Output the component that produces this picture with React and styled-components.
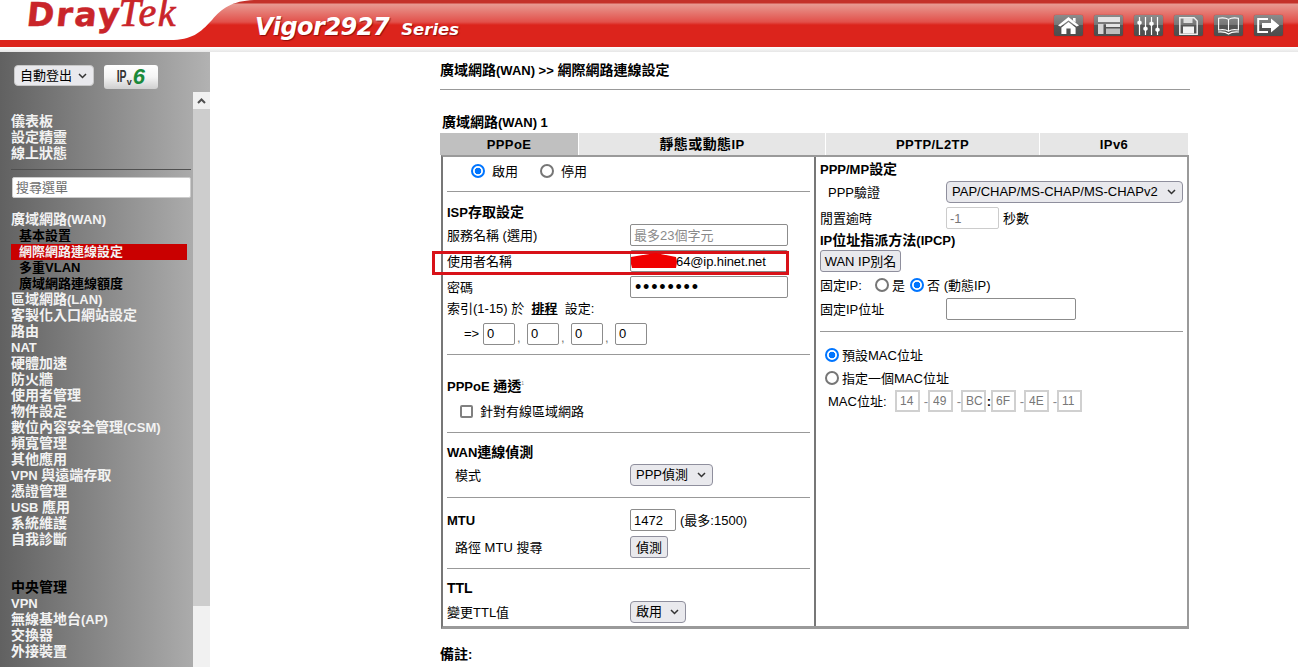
import React from 'react'
import styled, { createGlobalStyle } from 'styled-components'

const FONT = `"Liberation Sans", Arial, "Noto Sans CJK TC", sans-serif`
const CHEVRON = `url("data:image/svg+xml,%3Csvg xmlns='http://www.w3.org/2000/svg' width='9' height='6'%3E%3Cpath d='M1 1l3.5 3.5L8 1' fill='none' stroke='%23333' stroke-width='1.5'/%3E%3C/svg%3E")`

const GlobalStyle = createGlobalStyle`
html, body {
	margin: 0;
	padding: 0;
	height: 100%;
	overflow: hidden;
	background: #fff;
	font-family: ${FONT};
	font-size: 13px;
	color: #000;
}
`

const topMenu = ['儀表板', '設定精靈', '線上狀態']
const mainMenu = [
	{ label: '廣域網路(WAN)' },
	{ label: '基本設置', sub: true },
	{ label: '網際網路連線設定', sub: true, active: true },
	{ label: '多重VLAN', sub: true },
	{ label: '廣域網路連線額度', sub: true },
	{ label: '區域網路(LAN)' },
	{ label: '客製化入口網站設定' },
	{ label: '路由' },
	{ label: 'NAT' },
	{ label: '硬體加速' },
	{ label: '防火牆' },
	{ label: '使用者管理' },
	{ label: '物件設定' },
	{ label: '數位內容安全管理(CSM)' },
	{ label: '頻寬管理' },
	{ label: '其他應用' },
	{ label: 'VPN 與遠端存取' },
	{ label: '憑證管理' },
	{ label: 'USB 應用' },
	{ label: '系統維護' },
	{ label: '自我診斷' },
]
const centralMenu = ['VPN', '無線基地台(AP)', '交換器', '外接裝置']
const tabs = [
	{ label: 'PPPoE', w: 138, active: true },
	{ label: '靜態或動態IP', w: 246 },
	{ label: 'PPTP/L2TP', w: 213 },
	{ label: 'IPv6', w: 148 },
]
const macParts = [
	{ v: '14', sep: '-' },
	{ v: '49', sep: '-' },
	{ v: 'BC', sep: ':' },
	{ v: '6F', sep: '-' },
	{ v: '4E', sep: '-' },
	{ v: '11' },
]

// bold headings use bigger CJK than latin, so the ascii runs get their own span
const Mixed = ({ text }) => text.split(/([\x00-\x7f]+)/).map((s, i) => (i % 2 ? <Ascii key={i}>{s}</Ascii> : s))

const HomeIcon = () => (
	<svg width="21" height="17" viewBox="0 0 21 17">
		<path d="M10.5 0 L21 8.5 L18.6 9.6 L10.5 3.4 L2.4 9.6 L0 8.5 Z" fill="#fff" />
		<path d="M15 1 h2.6 v4.4 L15 3.4 Z" fill="#fff" />
		<path d="M10.5 5 L17.6 10.4 V17 H12.6 V11.6 H8.4 V17 H3.4 V10.4 Z" fill="#fff" />
	</svg>
)

const LayoutIcon = () => (
	<svg width="22" height="17" viewBox="0 0 22 17">
		<rect x="0" y="0" width="22" height="5" fill="#e4e4e4" />
		<rect x="0" y="7" width="5.5" height="10" fill="#d4d4d4" />
		<rect x="8" y="7" width="14" height="3" fill="#e4e4e4" />
		<rect x="8" y="11.5" width="14" height="5.5" fill="#bdbdbd" />
	</svg>
)

const SlidersIcon = () => (
	<svg width="23" height="18" viewBox="0 0 23 18" stroke="#fff" fill="#fff">
		<path d="M2.5 0 V18 M8.5 0 V18 M14.5 0 V18 M20.5 0 V18" strokeWidth="1.2" />
		<rect x="0.5" y="4" width="4" height="3.4" rx="1.4" strokeWidth="0.4" />
		<rect x="6.5" y="10" width="4" height="3.4" rx="1.4" strokeWidth="0.4" />
		<rect x="12.5" y="5" width="4" height="3.4" rx="1.4" strokeWidth="0.4" />
		<rect x="18.5" y="11" width="4" height="3.4" rx="1.4" strokeWidth="0.4" />
	</svg>
)

const SaveIcon = () => (
	<svg width="19" height="18" viewBox="0 0 19 18" fill="none">
		<path d="M0.8 0.8 H15 L18.2 4 V17.2 H0.8 Z" stroke="#eee" strokeWidth="1.5" />
		<rect x="4.5" y="1" width="9" height="5" fill="#ddd" />
		<rect x="4" y="9.5" width="11" height="7" fill="#f2f2f2" />
	</svg>
)

const BookIcon = () => (
	<svg width="23" height="18" viewBox="0 0 23 18" fill="none" stroke="#fff" strokeWidth="1.1">
		<path d="M11.5 2.4 C9 0.8 5 0.6 1.6 1.2 V13 C5 12.4 9 12.6 11.5 14.2 C14 12.6 18 12.4 21.4 13 V1.2 C18 0.6 14 0.8 11.5 2.4 Z" />
		<path d="M11.5 2.4 V14.2" />
		<path d="M1 15 C5 14.6 9 15 11.5 17 C14 15 18 14.6 22 15" />
	</svg>
)

const LogoutIcon = () => (
	<svg width="23" height="15" viewBox="0 0 23 15" fill="none">
		<path d="M11 1 H1.2 V14 H11" stroke="#fff" strokeWidth="2" />
		<path d="M5 5 H14 V0.6 L22.4 7.5 L14 14.4 V10 H5 Z" fill="#fff" />
	</svg>
)

const headerIcons = [HomeIcon, LayoutIcon, SlidersIcon, SaveIcon, BookIcon, LogoutIcon]

export default function App() {
	return (
		<Page>
			<GlobalStyle />
			<Header>
				<Swoosh viewBox="0 0 300 50" preserveAspectRatio="none">
					<path d="M0 0 H254 C232 1 222 8 212 20 C200 33 192 40 170 40 H0 Z" fill="#fff" />
				</Swoosh>
				<Logo>
					<LogoDray>Dray</LogoDray>
					<LogoTek>Tek</LogoTek>
				</Logo>
				<Model>
					Vigor2927<ModelSeries>Series</ModelSeries>
				</Model>
				<HeaderIcons>
					{headerIcons.map((Icon, i) => (
						<IconButton key={i}>
							<Icon />
						</IconButton>
					))}
				</HeaderIcons>
			</Header>
			<Body>
				<Sidebar>
					<SideTop>
						<LogoutSelect defaultValue="a">
							<option value="a">自動登出</option>
						</LogoutSelect>
						<Ipv6Button>
							<span>IP</span>
							<small>v</small>
							<b>6</b>
						</Ipv6Button>
					</SideTop>
					<SideBody>
						<Menu>
							{topMenu.map(m => <MenuItem key={m}>{m}</MenuItem>)}
							<MenuRule />
							<SearchInput placeholder="搜尋選單" />
							<MenuGroup $top={14}>
								{mainMenu.map(m => (
									<MenuItem key={m.label} $sub={m.sub} $active={m.active}>
										<Mixed text={m.label} />
									</MenuItem>
								))}
							</MenuGroup>
							<MenuGroup $top={32}>
								<MenuHead>中央管理</MenuHead>
								{centralMenu.map(m => <MenuItem key={m}><Mixed text={m} /></MenuItem>)}
							</MenuGroup>
						</Menu>
						<Scrollbar>
							<ScrollUp>
								<svg width="9" height="6" viewBox="0 0 9 6" fill="none">
									<path d="M1 5 L4.5 1.5 L8 5" stroke="#505050" strokeWidth="2" />
								</svg>
							</ScrollUp>
							<ScrollThumb />
						</Scrollbar>
					</SideBody>
				</Sidebar>
				<Main>
					<PageTitle><Mixed text="廣域網路(WAN) >> 網際網路連線設定" /></PageTitle>
					<TitleRule />
					<WanTitle><Mixed text="廣域網路(WAN) 1" /></WanTitle>
					<Tabs>
						{tabs.map(t => <Tab key={t.label} $w={t.w} $active={t.active}><Mixed text={t.label} /></Tab>)}
					</Tabs>
					<Panel>
						<LeftCell>
							<Row $h={28} $indent={24}>
								<Radio name="en" defaultChecked />
								<RadioLabel $w={48}>啟用</RadioLabel>
								<Radio name="en" />
								<RadioLabel>停用</RadioLabel>
							</Row>
							<Divider $top={6} />

							<SectionTitle $top={12}><Mixed text="ISP存取設定" /></SectionTitle>
							<Row $h={26} $top={2}>
								<Label>服務名稱 (選用)</Label>
								<TextInput $w={158} placeholder="最多23個字元" />
							</Row>
							<Row $h={26}>
								<Label>使用者名稱</Label>
								<UserInput $w={158} defaultValue="64@ip.hinet.net" />
							</Row>
							<Row $h={26}>
								<Label>密碼</Label>
								<PasswordInput $w={158} type="password" defaultValue="12345678" />
							</Row>
							<Row $h={16}>
								<PlainText>索引(1-15) 於&nbsp;&nbsp;<ScheduleLink>排程</ScheduleLink>&nbsp;&nbsp;設定:</PlainText>
							</Row>
							<Row $h={27} $top={4} $indent={17}>
								<Arrow>=&gt;</Arrow>
								{[0, 1, 2, 3].map(i => (
									<IndexField key={i}>
										<TextInput $w={32} defaultValue="0" />
										{i < 3 && <Comma>,</Comma>}
									</IndexField>
								))}
							</Row>
							<Divider $top={7} />

							<SectionTitle $top={20}><Mixed text="PPPoE 通透" /><Sup>1</Sup></SectionTitle>
							<Row $h={24} $top={8} $indent={12}>
								<Check />
								<RadioLabel>針對有線區域網路</RadioLabel>
							</Row>
							<Divider $top={9} />

							<SectionTitle $top={11}><Mixed text="WAN連線偵測" /></SectionTitle>
							<Row $h={26} $top={2}>
								<Label $indent={8}>模式</Label>
								<Select $w={83}><option>PPP偵測</option></Select>
							</Row>
							<Divider $top={9} />

							<Row $h={26} $top={9}>
								<BoldLabel>MTU</BoldLabel>
								<TextInput $w={46} defaultValue="1472" />
								<Hint>(最多:1500)</Hint>
							</Row>
							<Row $h={26} $top={1}>
								<Label $indent={8}>路徑 MTU 搜尋</Label>
								<PushButton $w={38}>偵測</PushButton>
							</Row>
							<Divider $top={8} />

							<SectionTitle $top={11}>TTL</SectionTitle>
							<Row $h={26} $top={3}>
								<Label>變更TTL值</Label>
								<Select $w={56}><option>啟用</option></Select>
							</Row>
						</LeftCell>
						<RightCell>
							<SectionTitle $top={4}><Mixed text="PPP/MP設定" /></SectionTitle>
							<Row $h={26} $top={2}>
								<Label $w={126} $indent={8}>PPP驗證</Label>
								<Select $w={237}><option>PAP/CHAP/MS-CHAP/MS-CHAPv2</option></Select>
							</Row>
							<Row $h={26}>
								<Label $w={126}>閒置逾時</Label>
								<TextInput $w={53} $disabled disabled defaultValue="-1" />
								<Hint>秒數</Hint>
							</Row>
							<SectionTitle $top={1}><Mixed text="IP位址指派方法(IPCP)" /></SectionTitle>
							<Row $h={22} $top={2}>
								<PushButton $w={81}>WAN IP別名</PushButton>
							</Row>
							<Row $h={26}>
								<StaticLabel>固定IP:</StaticLabel>
								<Radio name="fixed" />
								<InlineText>是</InlineText>
								<Radio name="fixed" defaultChecked />
								<InlineText>否 (動態IP)</InlineText>
							</Row>
							<Row $h={22}>
								<Label $w={126}>固定IP位址</Label>
								<TextInput $w={130} />
							</Row>
							<Divider $top={11} />
							<Row $h={22} $top={12} $indent={5}>
								<Radio name="mac" defaultChecked />
								<InlineText>預設MAC位址</InlineText>
							</Row>
							<Row $h={22} $top={1} $indent={5}>
								<Radio name="mac" />
								<InlineText>指定一個MAC位址</InlineText>
							</Row>
							<Row $h={22} $top={1} $indent={8}>
								<MacLabel>MAC位址:</MacLabel>
								{macParts.map(p => (
									<MacField key={p.v}>
										<MacInput disabled defaultValue={p.v} />
										{p.sep && <MacSep $bold={p.sep === ':'}>{p.sep}</MacSep>}
									</MacField>
								))}
							</Row>
						</RightCell>
						<Highlight />
						<Scribble viewBox="0 0 46 15">
							<path d="M0 4 C8 3 16 1 25 0 C31 1 38 3 45 4 L46 9 L45 15 H1 L0 11 Z" fill="#f00000" />
						</Scribble>
					</Panel>
					<Footnote>備註<Ascii>:</Ascii></Footnote>
				</Main>
			</Body>
		</Page>
	)
}

const Ascii = styled.span`
	font-size: 13px;
`

const Page = styled.div`
	width: 100%;
	height: 100vh;
	display: flex;
	flex-direction: column;
	overflow: hidden;
`

const Header = styled.header`
	position: relative;
	flex: none;
	height: 52px;
	display: flex;
	align-items: flex-start;
	background:
		linear-gradient(#fff, #e6e6e6) 0 47px / 100% 5px no-repeat,
		linear-gradient(#c4312a 0, #c4312a 3px, #e89a92 4px, #e2504a 22px, #dc241c 25px, #dc241c 47px) 0 0 / 100% 47px no-repeat;
`

const Swoosh = styled.svg`
	position: absolute;
	left: 0;
	top: 0;
	width: 300px;
	height: 50px;
`

const Logo = styled.div`
	position: relative;
	margin: -2px 0 0 27px;
	width: 228px;
	flex: none;
	display: flex;
	align-items: baseline;
	color: #c9252a;
	line-height: 30px;
`

const LogoDray = styled.span`
	font: bold 33px "DejaVu Sans", sans-serif;
	line-height: 30px;
	letter-spacing: 2px;
	-webkit-text-stroke: 0.5px #c9252a;
	transform: skewX(-6deg);
`

const LogoTek = styled.span`
	font: italic 40px "Liberation Serif", serif;
	line-height: 30px;
	margin-left: -3px;
	letter-spacing: 1.5px;
	-webkit-text-stroke: 0.7px #c9252a;
`

const Model = styled.div`
	position: relative;
	margin-top: 13px;
	font: italic bold 24px "DejaVu Sans", sans-serif;
	letter-spacing: -0.5px;
	color: #fff;
	line-height: 28px;
	text-shadow: 1px 1px 1px rgba(90, 0, 0, .6);
`

const ModelSeries = styled.span`
	font-size: 16.5px;
	margin-left: 12px;
	letter-spacing: 0;
`

const HeaderIcons = styled.nav`
	position: relative;
	margin: 15px 15px 0 auto;
	display: flex;
	gap: 11px;
`

const IconButton = styled.div`
	width: 29px;
	height: 21px;
	border-radius: 2px;
	display: flex;
	align-items: center;
	justify-content: center;
	background: linear-gradient(#8b8b8b 0, #777 45%, #555 50%, #4d4d4d 100%);
	box-shadow: 0 0 1px rgba(60, 0, 0, .7);
`

const Body = styled.div`
	flex: 1;
	display: flex;
	min-height: 0;
`

const Sidebar = styled.aside`
	flex: none;
	width: 210px;
	display: flex;
	flex-direction: column;
	background: linear-gradient(90deg, #616161, #b2b2b2);
`

const SideTop = styled.div`
	flex: none;
	height: 40px;
	display: flex;
	align-items: flex-start;
	gap: 10px;
	padding: 13px 0 0 14px;
	box-sizing: border-box;
`

const LogoutSelect = styled.select`
	appearance: none;
	width: 80px;
	height: 21px;
	padding: 0 0 1px 5px;
	font: 13px ${FONT};
	border: 1px solid #c8c8c8;
	border-radius: 4px;
	background: #e9e9ed ${CHEVRON} no-repeat right 6px center;
`

const Ipv6Button = styled.div`
	width: 54px;
	height: 24px;
	border-radius: 3px;
	display: flex;
	align-items: center;
	justify-content: center;
	background: linear-gradient(#fff, #f4f4f4 50%, #cfcfcf);
	color: #333;

	span {
		display: inline-block;
		font: bold 16px "Liberation Sans", sans-serif;
		transform: scaleX(.65);
		margin: 0 -2.6px;
	}

	small {
		font: bold 9px "Liberation Sans", sans-serif;
		margin: 9px 0 0 0;
	}

	b {
		font: italic bold 22px "Liberation Sans", sans-serif;
		color: #1a8a3a;
		margin-left: 1px;
	}
`

const SideBody = styled.div`
	flex: 1;
	min-height: 0;
	display: flex;
`

const Menu = styled.div`
	flex: 1;
	padding: 22px 2px 0 11px;
	min-width: 0;
`

const MenuItem = styled.div`
	height: 16px;
	line-height: ${p => (p.$sub ? 16 : 14)}px;
	font-weight: bold;
	font-size: ${p => (p.$sub ? 13 : 14)}px;
	white-space: nowrap;
	color: ${p => (p.$sub && !p.$active ? '#000' : '#f2f2f2')};
	padding-left: ${p => (p.$sub ? '8px' : '0')};
	margin-right: ${p => (p.$active ? '4px' : '0')};
	background: ${p => (p.$active ? '#c90000' : 'transparent')};
`

const MenuHead = styled(MenuItem)`
	color: #000;
`

const MenuRule = styled.div`
	margin-top: 7px;
	height: 1px;
	background: #505050;
`

const SearchInput = styled.input`
	display: block;
	width: 179px;
	height: 21px;
	margin: 7px 0 0 1px;
	padding: 0 3px;
	box-sizing: border-box;
	border: 1px solid #ccc;
	border-radius: 2px;
	font: 13px ${FONT};

	&::placeholder {
		color: #6e6e6e;
	}
`

const MenuGroup = styled.div`
	margin-top: ${p => p.$top}px;
`

const Scrollbar = styled.div`
	flex: none;
	width: 17px;
	background: #f1f1f1;
	display: flex;
	flex-direction: column;
`

const ScrollUp = styled.div`
	height: 17px;
	display: flex;
	align-items: center;
	justify-content: center;
`

const ScrollThumb = styled.div`
	height: 497px;
	background: #cdcdcd;
`

const Main = styled.main`
	flex: 1;
	padding: 10px 0 0 230px;
	min-width: 0;
`

const PageTitle = styled.div`
	font-weight: bold;
	font-size: 14px;
	line-height: 16px;
	height: 16px;
`

const TitleRule = styled.div`
	width: 750px;
	height: 1px;
	margin-top: 11px;
	background: #999;
`

const WanTitle = styled.div`
	margin: 24px 0 0 2px;
	height: 16px;
	line-height: 16px;
	font-weight: bold;
	font-size: 14px;
`

const Tabs = styled.div`
	margin-top: 3px;
	display: flex;
	gap: 1px;
	height: 22px;
`

const Tab = styled.div`
	width: ${p => p.$w}px;
	background: ${p => (p.$active ? '#c0c0c0' : '#e6e6e6')};
	text-align: center;
	line-height: 22px;
	font-weight: bold;
	font-size: 14px;
	letter-spacing: .4px;
`

const Panel = styled.div`
	position: relative;
	margin-left: 1px;
	width: 748px;
	height: 474px;
	box-sizing: border-box;
	border: 2px solid #9a9a9a;
	border-bottom-width: 3px;
	border-left-color: #777;
	display: flex;
`

const LeftCell = styled.div`
	flex: none;
	width: 373px;
	box-sizing: border-box;
	padding: 0 4px 0 4px;
	border-right: 2px solid #777;
`

const RightCell = styled.div`
	flex: 1;
	min-width: 0;
	padding: 0 4px 0 4px;
`

const Row = styled.div`
	display: flex;
	align-items: center;
	height: ${p => p.$h}px;
	margin-top: ${p => p.$top || 0}px;
	padding-left: ${p => p.$indent || 0}px;
	white-space: nowrap;
`

const SectionTitle = styled.div`
	height: 16px;
	line-height: 16px;
	margin-top: ${p => p.$top || 0}px;
	font-weight: bold;
	font-size: 14px;
`

const Divider = styled.div`
	height: 1px;
	margin-top: ${p => p.$top || 0}px;
	background: #999;
`

const Label = styled.span`
	flex: none;
	width: ${p => (p.$w || 183) - (p.$indent || 0)}px;
	padding: 0 0 2px ${p => p.$indent || 0}px;
	box-sizing: content-box;
`

const BoldLabel = styled.b`
	flex: none;
	width: 183px;
`

const PlainText = styled.span`
	padding-bottom: 2px;
`

const StaticLabel = styled.span`
	width: 55px;
	flex: none;
	padding-bottom: 2px;
`

const Radio = styled.input.attrs({ type: 'radio' })`
	appearance: none;
	flex: none;
	width: 14px;
	height: 14px;
	margin: 0;
	box-sizing: border-box;
	border: 2px solid #767676;
	border-radius: 50%;
	background: #fff;

	&:checked {
		border-color: #0075ff;
		background: radial-gradient(circle, #0075ff 0, #0075ff 3px, #fff 3.6px);
	}
`

const RadioLabel = styled.span`
	margin-left: 7px;
	padding-bottom: 2px;
	width: ${p => (p.$w ? `${p.$w}px` : 'auto')};
`

const InlineText = styled.span`
	margin: 0 5px 0 3px;
	padding-bottom: 2px;
`

const Check = styled.input.attrs({ type: 'checkbox' })`
	appearance: none;
	flex: none;
	width: 13px;
	height: 13px;
	margin: 0 0 0 1px;
	box-sizing: border-box;
	border: 2px solid #808080;
	border-radius: 2px;
	background: #fff;
`

const TextInput = styled.input`
	flex: none;
	width: ${p => p.$w}px;
	height: 22px;
	box-sizing: border-box;
	padding: 0 3px;
	margin: 0;
	border: 1px solid ${p => (p.$disabled ? '#ccc' : '#8c8c8c')};
	border-radius: 2px;
	background: #fff;
	font: 13px ${FONT};
	color: ${p => (p.$disabled ? '#777' : '#000')};

	&::placeholder {
		color: #8a8a8a;
	}
`

const UserInput = styled(TextInput)`
	padding-left: 45px;
	letter-spacing: -0.1px;
`

const PasswordInput = styled(TextInput)`
	padding-left: 4px;
	font-size: 18px;
	letter-spacing: 1.8px;
`

const MacInput = styled.input`
	flex: none;
	width: 25px;
	height: 22px;
	box-sizing: border-box;
	padding: 0 0 0 3px;
	margin: 0;
	border: 2px solid #d0d0d0;
	background: #fff;
	font: 12px ${FONT};
	color: #777;
`

const Select = styled.select`
	appearance: none;
	flex: none;
	width: ${p => p.$w}px;
	height: 22px;
	margin: 0;
	padding: 0 0 1px 5px;
	font: 13px ${FONT};
	color: #000;
	border: 1px solid #8f8f9d;
	border-radius: 4px;
	background: #e9e9ed ${CHEVRON} no-repeat right 6px center;
`

const PushButton = styled.button`
	flex: none;
	width: ${p => p.$w}px;
	height: 22px;
	padding: 0 0 2px;
	font: 13px ${FONT};
	color: #000;
	border: 1px solid #8f8f9d;
	border-radius: 3px;
	background: #e9e9ed;
`

const Hint = styled.span`
	margin-left: 4px;
	padding-bottom: 2px;
`

const ScheduleLink = styled.span`
	font-weight: bold;
	text-decoration: underline;
`

const Arrow = styled.span`
	width: 19px;
`

const IndexField = styled.span`
	display: flex;
	align-items: flex-end;
`

const Comma = styled.span`
	width: 10px;
	padding-left: 2px;
	color: #777;
`

const Sup = styled.sup`
	font-size: 5px;
	font-weight: normal;
	color: #888;
`

const MacLabel = styled.span`
	width: 67px;
	flex: none;
	padding-bottom: 2px;
`

const MacField = styled.span`
	display: flex;
	align-items: center;
`

const MacSep = styled.span`
	width: ${p => (p.$bold ? 5 : 8)}px;
	text-align: right;
	font-weight: ${p => (p.$bold ? 'bold' : 'normal')};
	color: ${p => (p.$bold ? '#000' : '#888')};
`

const Highlight = styled.div`
	position: absolute;
	left: -11px;
	top: 94px;
	width: 357px;
	height: 24px;
	box-sizing: border-box;
	border: 3px solid #d81218;
	pointer-events: none;
`

const Scribble = styled.svg`
	position: absolute;
	z-index: 2;
	left: 188px;
	top: 96px;
	width: 46px;
	height: 15px;
`

const Footnote = styled.div`
	margin-top: 17px;
	font-weight: bold;
	font-size: 14px;
	line-height: 16px;
`
